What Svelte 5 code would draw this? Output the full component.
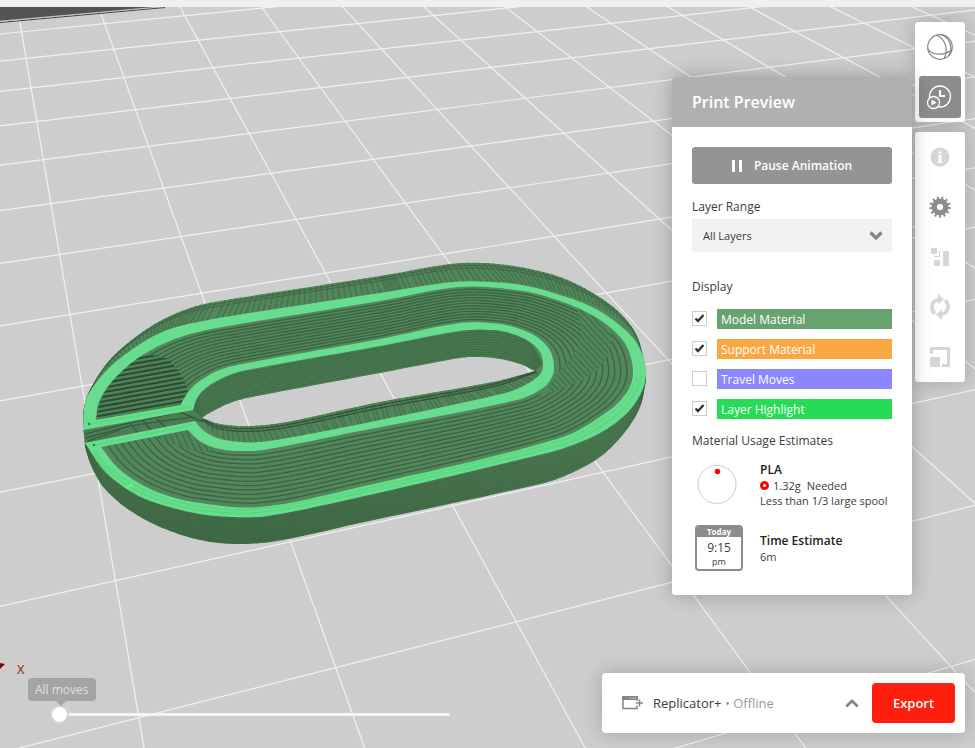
<script>
  const rows = [
    { id: 'model', label: 'Model Material', color: '#67a36e', on: true },
    { id: 'support', label: 'Support Material', color: '#faa843', on: true },
    { id: 'travel', label: 'Travel Moves', color: '#8b88ff', on: false },
    { id: 'highlight', label: 'Layer Highlight', color: '#26db55', on: true }
  ];
  let display = $state(rows);
  let move = $state(0);

  // Projective mapping of a plate rectangle (4 x 8 cells) onto the view.
  const quad = [[26, 58.3], [358, 23.5], [668.3, 360], [97, 473]];
  function makeProjection([p0, p1, p2, p3]) {
    const dx1 = p1[0] - p2[0], dx2 = p3[0] - p2[0], dx3 = p0[0] - p1[0] + p2[0] - p3[0];
    const dy1 = p1[1] - p2[1], dy2 = p3[1] - p2[1], dy3 = p0[1] - p1[1] + p2[1] - p3[1];
    const d = dx1 * dy2 - dx2 * dy1;
    const g = (dx3 * dy2 - dx2 * dy3) / d;
    const h = (dx1 * dy3 - dx3 * dy1) / d;
    return (u, v) => {
      const s = u / 4, t = (v - 2) / 8;
      const w = g * s + h * t + 1;
      return [
        ((p1[0] - p0[0] + g * p1[0]) * s + (p3[0] - p0[0] + h * p3[0]) * t + p0[0]) / w,
        ((p1[1] - p0[1] + g * p1[1]) * s + (p3[1] - p0[1] + h * p3[1]) * t + p0[1]) / w
      ];
    };
  }
  const project = makeProjection(quad);
  const seg = (a, b) => `M${a[0].toFixed(1)},${a[1].toFixed(1)}L${b[0].toFixed(1)},${b[1].toFixed(1)}`;
  const plateEdge = 0.5;
  let gridPath = seg(project(-1, plateEdge), project(16, plateEdge));
  for (let u = 0; u <= 16; u++) gridPath += seg(project(u, plateEdge), project(u, 16));
  for (let v = 1; v <= 16; v++) gridPath += seg(project(-1, v), project(16, v));

  // Smooth curve through the control points.
  function spline(p, n = 12) {
    const out = [];
    for (let i = 0; i < p.length - 1; i++) {
      const a = p[Math.max(i - 1, 0)], b = p[i], c = p[i + 1], e = p[Math.min(i + 2, p.length - 1)];
      const len = Math.hypot(c[0] - b[0], c[1] - b[1]);
      const before = Math.hypot(b[0] - a[0], b[1] - a[1]);
      const after = Math.hypot(e[0] - c[0], e[1] - c[1]);
      for (let k = 0; k < n; k++) {
        const t = k / n, t2 = t * t, t3 = t2 * t;
        out.push([0, 1].map((j) => {
          const m0 = ((c[j] - a[j]) / (len + before)) * len;
          const m1 = ((e[j] - b[j]) / (len + after)) * len;
          return (2 * t3 - 3 * t2 + 1) * b[j] + (t3 - 2 * t2 + t) * m0 + (3 * t2 - 2 * t3) * c[j] + (t3 - t2) * m1;
        }));
      }
    }
    out.push(p[p.length - 1]);
    return out;
  }
  const line = (pts) => 'M' + pts.map((q) => q[0].toFixed(1) + ',' + q[1].toFixed(1)).join('L');
  const band = (a, b) => line([...spline(a), ...spline(b).reverse()]) + 'Z';
  function loft(a, b, count, max = count) {
    const A = spline(a), B = spline(b);
    let d = '';
    for (let i = 1; i < max; i++) {
      const t = i / count;
      d += line(A.map((q, k) => [q[0] + (B[k][0] - q[0]) * t, q[1] + (B[k][1] - q[1]) * t]));
    }
    return d;
  }
  // Short diagonal strokes across a strip between two curves.
  function ribs(a, b, step, lean) {
    const A = spline(a, 30), B = spline(b, 30);
    let d = '', run = 0;
    for (let k = 1; k < A.length; k++) {
      run += Math.hypot(A[k][0] - A[k - 1][0], A[k][1] - A[k - 1][1]);
      if (run >= step) {
        run -= step;
        d += seg(A[k], [B[k][0] + lean, B[k][1]]);
      }
    }
    return d;
  }

  const infillOuter = [[96, 420], [98, 405], [106, 389], [120, 373], [138, 358], [163, 344], [187, 335], [217, 328], [380, 301], [460, 287], [523, 291], [560, 301], [590, 314], [612, 329], [627, 347], [633, 373], [627, 392], [607, 412], [560, 438], [360, 487], [260, 507], [193, 502], [160, 493], [137, 482], [117, 467], [101, 447]];
  const infillInner = [[181, 405], [182, 402], [185, 397], [190, 390], [197, 383], [206, 377], [217, 371], [237, 365], [380, 339], [460, 323], [500, 324], [523, 330], [537, 337], [547, 346], [552, 355], [554, 367], [552, 377], [543, 388], [517, 400], [360, 431], [263, 450], [237, 451], [220, 449], [207, 445], [197, 439], [188, 430]];
  const edgeOuter = [[83, 430], [85, 403], [93, 387], [110, 367], [127, 353], [150, 338], [173, 328], [203, 321], [237, 315], [380, 293], [453, 282], [493, 282], [527, 286], [560, 295], [590, 306], [613, 320], [633, 338], [643, 356], [646, 373], [642, 391], [627, 413], [600, 433], [567, 447], [547, 453], [360, 497], [267, 516], [233, 517], [200, 514], [170, 507], [143, 498], [121, 485], [103, 469], [85, 443]];
  const edgeInner = [[193, 410], [197, 398], [207, 387], [227, 376], [247, 370], [380, 346], [460, 331], [493, 330], [513, 334], [530, 342], [540, 352], [543, 363], [541, 373], [527, 384], [505, 393], [380, 420], [293, 437], [260, 442], [240, 442], [217, 438], [203, 430], [195, 421]];
  const highlight = line([...spline(edgeOuter), ...spline(edgeInner).reverse()]) + 'Z' +
    line([...spline(infillOuter), ...spline(infillInner).reverse()]) + 'Z';

  const skirtTop = [[85, 443], [92, 455], [103, 470], [121, 485], [143, 498], [170, 507], [200, 514], [233, 517], [267, 516], [360, 497], [547, 453], [567, 447], [600, 433], [627, 413], [642, 391], [646, 373]];
  const skirtBottom = [[85, 446], [90, 463], [101, 484], [113, 497], [129, 510], [160, 527], [200, 540], [237, 544], [277, 541], [360, 523], [540, 484], [567, 475], [600, 457], [625, 432], [640, 407], [646, 380]];
  const rimTop = [[83, 425], [84, 408], [90, 390], [107, 363], [129, 342], [160, 321], [193, 307], [220, 301], [380, 276], [450, 264], [483, 263], [520, 267], [560, 277], [593, 293], [620, 313], [637, 336], [645, 365]];
  const rimBottom = [[82, 422], [85, 403], [93, 387], [110, 367], [127, 353], [150, 338], [173, 328], [203, 321], [380, 293], [453, 282], [493, 282], [527, 286], [560, 295], [590, 306], [613, 320], [633, 338], [645, 365]];
  const wallTop = [[193, 410], [197, 398], [207, 387], [227, 376], [247, 370], [380, 346], [460, 331], [493, 330], [513, 334], [530, 342], [543, 363]];
  const wallBottom = [[202, 418], [206, 415], [217, 409], [230, 403], [247, 398], [380, 373], [460, 358], [480, 357], [500, 359], [520, 364], [535, 371]];
  const lipTop = [[202, 418], [220, 424], [250, 426], [287, 422], [380, 402], [493, 382], [535, 371]];
  const lipBottom = [[198, 423], [217, 438], [250, 442], [293, 437], [380, 420], [505, 393], [541, 373]];

  const silhouette = line([...spline(rimTop), ...spline(skirtBottom).reverse()]) + 'Z';
  const hole = line([...spline(wallBottom), ...spline(lipTop).reverse()]) + 'Z';

  let lobeLines = '';
  for (let i = 0; i < 17; i++) lobeLines += seg([88, 418 - i * 4.6], [200, 398 - i * 4.6]);
  let patchLines = '';
  for (let i = 0; i < 26; i++) patchLines += seg([460 + i * 6, 290], [580 + i * 6, 420]);
  let lowerRibs = '';
  for (let i = 0; i < 14; i++) lowerRibs += seg([150 + i * 6, 430], [164 + i * 6, 460]);
</script>

<main class="app">
  <svg class="scene" viewBox="0 0 975 748" preserveAspectRatio="xMinYMin slice" aria-hidden="true">
    <defs>
      <clipPath id="solid"><path d={silhouette + hole} clip-rule="evenodd" /></clipPath>
      <clipPath id="lobe"><path d="M96,420C97,392 125,362 145,355Q162,354 170,361Q184,376 188,390L181,405Z" /></clipPath>
      <clipPath id="patch"><path d="M577,308Q604,320 611,334Q614,352 597,370Q570,389 538,396Q552,386 556,374Q577,356 581,335Q581,320 577,308Z" /></clipPath>
      <clipPath id="tri"><path d="M155,437L188,430Q196,443 214,449L204,453Q178,447 155,437Z" /></clipPath>
      <linearGradient id="skirt" x1="0" y1="0" x2="0" y2="1">
        <stop offset="0" stop-color="#528358" />
        <stop offset="1" stop-color="#406946" />
      </linearGradient>
    </defs>
    <rect width="975" height="748" fill="#cdcdcd" />
    <path d={gridPath} fill="none" stroke="#f1f1f1" stroke-width="1.200" />
    <path d="M0,0H190L165,7L0,21.500Z" fill="#535353" />
    <path d="M0,22.500L165,7.500" stroke="#414141" stroke-width="1.200" />
    <path d="M0,21.200L165,6.500" stroke="#e4e4e4" stroke-width=".8" />
    <path d={silhouette + hole} fill="#53875b" fill-rule="evenodd" />
    <g clip-path="url(#solid)" fill="none">
      <path d={band(skirtTop, skirtBottom)} fill="url(#skirt)" />
      <path d={loft(skirtTop, skirtBottom, 10)} stroke="#3b6241" stroke-width=".7" opacity=".8" />
      <path d={ribs(rimTop, rimBottom, 5, 7)} stroke="#457350" stroke-width="1.500" />
      <path d={loft(rimTop, rimBottom, 7, 3)} stroke="#3d6644" stroke-width="1" />
      <path d={band(wallTop, wallBottom)} fill="#4a7a52" />
      <path d={loft(wallTop, wallBottom, 11)} stroke="#3a6241" stroke-width=".7" />
      <path d={band(lipTop, lipBottom)} fill="#52855b" />
      <path d={ribs(lipTop, lipBottom, 5, 5)} stroke="#437150" stroke-width="1.300" />
      <path d={loft(lipTop, lipBottom, 6, 3)} stroke="#315437" stroke-width="1.300" />
      <path d={loft(infillOuter, infillInner, 13)} stroke="#3a6442" stroke-width="1.400" />
      <g clip-path="url(#lobe)">
        <rect x="90" y="340" width="110" height="90" fill="#4f8158" />
        <path d={lobeLines} stroke="#2b4a31" stroke-width="2" />
      </g>
      <g clip-path="url(#patch)">
        <rect x="530" y="290" width="100" height="120" fill="#52865b" />
        <path d={patchLines} stroke="#42704b" stroke-width="1.400" />
      </g>
      <g clip-path="url(#tri)">
        <rect x="150" y="425" width="70" height="35" fill="#51845a" />
        <path d={lowerRibs} stroke="#406d48" stroke-width="1.500" />
      </g>
      <path d="M83,431L193,411L203,419L196,422L85,443Z" fill="#4b7c54" />
      <path d="M85,434L125,424L180,412L203,422M86,438L130,426L170,420L194,417M88,441L120,430M130,423l8,10M143,421l8,9M157,419l8,8" stroke="#335739" stroke-width="1.200" />
    </g>
    <path d={highlight} fill="#68dd90" fill-rule="evenodd" />
    <path d={loft(skirtTop.slice(1), [[95, 447], [107, 462], [123, 474], [141, 484], [160, 493], [180, 499], [204, 504], [233, 507], [263, 507], [360, 487], [540, 443], [560, 438], [590, 422], [618, 403], [633, 380]], 3)} fill="none" stroke="#53d773" stroke-width="1.500" opacity=".7" />
    <path d="M89,424L190,407M91,446L192,425" fill="none" stroke="#53d773" stroke-width="1.500" opacity=".7" />
    <path d="M126,488L133,484" stroke="#58f68c" stroke-width="3" />
    <circle cx="89" cy="424" r="1.200" fill="#257b3b" /><circle cx="94" cy="445" r="1.200" fill="#257b3b" />
    <path d="M0,663L5,664L0,669Z" fill="#8e0000" />
    <text x="17" y="674" class="axis">X</text>
  </svg>

  <div class="strip"></div>

  <div class="upper">
    <section class="panel">
      <h1>Print Preview</h1>
      <div class="body">
        <button class="pause">
          <svg width="10" height="12" viewBox="0 0 10 12"><path d="M0,0h3v12h-3zM7,0h3v12h-3z" fill="#fff" /></svg>
          Pause Animation
        </button>
        <label class="title range" for="layers">Layer Range</label>
        <div class="select">
          <select id="layers"><option>All Layers</option></select>
          <svg width="14" height="10" viewBox="0 0 14 10"><path d="M1.500,1.500L7,7L12.500,1.500" fill="none" stroke="#858585" stroke-width="3.200" /></svg>
        </div>
        <h2 class="title display">Display</h2>
        <div class="checks">
          {#each display as row (row.id)}
            <div class="check">
              <span class="box">
                <input type="checkbox" id={row.id} bind:checked={row.on} />
                {#if row.on}
                  <svg width="15" height="15" viewBox="0 0 15 15"><path d="M3.500,7.500L6,10L11.500,4" fill="none" stroke="#333" stroke-width="2.400" /></svg>
                {/if}
              </span>
              <label for={row.id} style="background: {row.color}">{row.label}</label>
            </div>
          {/each}
        </div>
        <h2 class="title usage">Material Usage Estimates</h2>
        <div class="estimate">
          <svg width="48" height="40" viewBox="0 0 48 40"><circle cx="22" cy="19.500" r="19" fill="#fff" stroke="#ccc" /><circle cx="22.500" cy="6.500" r="2.700" fill="#f00" /></svg>
          <div>
            <strong>PLA</strong>
            <p class="needed"><svg width="9" height="9" viewBox="0 0 9 9"><circle cx="4.500" cy="4.500" r="3" fill="#fff" stroke="#f00" stroke-width="3" /></svg>1.32g <span>Needed</span></p>
            <p>Less than 1/3 large spool</p>
          </div>
        </div>
        <div class="estimate time">
          <div class="calendar"><b>Today</b><span class="hour">9:15</span><span class="half">pm</span></div>
          <div>
            <strong>Time Estimate</strong>
            <p>6m</p>
          </div>
        </div>
      </div>
    </section>

    <nav class="tools">
      <div class="group">
        <button aria-label="Model view">
          <svg width="28" height="28" viewBox="0 0 28 28" fill="none" stroke="#858585" stroke-width="1.200"><circle cx="14" cy="14" r="12.300" /><path d="M1.800,16C6,22.500 19,23 26,16.500M16,1.800C25,6 27,16 22.500,22.500M10,2.300C19,5 23,16 18,25.500" /></svg>
        </button>
        <button class="active" aria-label="Print preview">
          <svg width="28" height="28" viewBox="0 0 28 28" fill="none" stroke="#fff" stroke-width="1.300"><circle cx="14" cy="13.500" r="10.500" /><path d="M14,7v6h5" stroke-width="2" /><circle cx="7.500" cy="19.500" r="6" fill="#8c8c8c" /><path d="M5.500,16.500l5,3l-5,3z" fill="#fff" stroke="none" /></svg>
        </button>
      </div>
      <div class="group">
        <button aria-label="Information">
          <svg width="20" height="20" viewBox="0 0 20 20"><circle cx="10" cy="10" r="9.500" fill="#d6d6d6" /><path d="M8,8h3.500v6.500h1v1.500h-5v-1.500h1.200v-5H8zM8.500,4.200h2.800v2.600H8.500z" fill="#fff" /></svg>
        </button>
        <button aria-label="Settings">
          <svg width="22" height="22" viewBox="0 0 22 22"><circle cx="11" cy="11" r="9.300" fill="none" stroke="#8c8c8c" stroke-width="2.800" stroke-dasharray="1.900 2.595" /><circle cx="11" cy="11" r="5.800" fill="none" stroke="#8c8c8c" stroke-width="5.400" /></svg>
        </button>
        <button aria-label="Arrange">
          <svg width="18" height="18" viewBox="0 0 18 18" fill="#d6d6d6"><path d="M0,0h6v6H0zM3,12h6v6H3zM12,3h6v15h-6zM3,7h1v2H3zM4,8h4V9H4zM7,3h2v6H8V4H7z" /></svg>
        </button>
        <button aria-label="Orient">
          <svg width="20" height="28" viewBox="0 0 20 28" fill="none"><path d="M5,20.500C.5,17.500 .5,8 8.500,6.800" stroke="#d6d6d6" stroke-width="3.600" /><path d="M8,1l6,5.500l-6,5z" fill="#d6d6d6" /><path d="M15,7.500C19.500,10.500 19.500,20 11.500,21.200" stroke="#d6d6d6" stroke-width="3.600" /><path d="M12,27l-6,-5.500l6,-5z" fill="#d6d6d6" /></svg>
        </button>
        <button aria-label="Scale">
          <svg width="20" height="20" viewBox="0 0 20 20" fill="#d6d6d6"><path d="M0,0h20v20h-8v-3h5V3H3v4H0zM0,10h10v10H0z" /></svg>
        </button>
      </div>
    </nav>
  </div>

  <div class="lower">
    <div class="moves">
      <label for="moves">All moves</label>
      <input id="moves" type="range" min="0" max="100" bind:value={move} />
    </div>
    <div class="printer">
      <svg width="21" height="14" viewBox="0 0 21 14"><path d="M1,1H15V5M1,1V12.500H15V9.500" fill="none" stroke="#858585" stroke-width="1.500" /><path d="M0,0h16v4H0z" fill="#858585" /><path d="M8,1.500h1v1H8zM10.500,1.500h1v1h-1zM13,1.500h1v1h-1z" fill="#fff" /><path d="M14,7h7M17.500,3.500v7" stroke="#858585" stroke-width="1.600" /></svg>
      <span class="name">Replicator+ <span class="state">• Offline</span></span>
      <button class="more" aria-label="Choose printer">
        <svg width="14" height="9" viewBox="0 0 14 9"><path d="M1.200,7.500L7,2L12.800,7.500" fill="none" stroke="#858585" stroke-width="2.800" /></svg>
      </button>
      <button class="export">Export</button>
    </div>
  </div>
</main>

<style>
  :global(body) { margin: 0; }
  .app {
    position: relative;
    box-sizing: border-box;
    min-height: 100vh;
    display: flex;
    flex-direction: column;
    overflow: hidden;
    font-family: "Open Sans", "Noto Sans", sans-serif;
    font-size: 12px;
    line-height: 16px;
    color: #3c3c3c;
    background: #cdcdcd;
  }
  .scene { position: absolute; inset: 0; width: 100%; height: 100%; }
  .axis { font-size: 13px; fill: #9a1515; }
  button, select { font: inherit; color: inherit; border: 0; padding: 0; margin: 0; background: none; }
  h1, h2, p { margin: 0; }
  .strip { position: relative; height: 7px; background: #f0f0f0; }
  .upper {
    position: relative;
    flex: 1;
    display: flex;
    justify-content: flex-end;
    align-items: flex-start;
    gap: 3px;
    padding: 15px 10px 0;
  }
  .panel {
    position: relative;
    z-index: 1;
    width: 240px;
    margin-top: 55px;
    border-radius: 3px;
    background: #fff;
    box-shadow: 0 0 20px rgba(0, 0, 0, 0.25);
  }
  h1 {
    padding: 0 20px;
    border-radius: 3px 3px 0 0;
    background: #b0b0b0;
    color: #fff;
    font-size: 16px;
    font-weight: 600;
    line-height: 50px;
  }
  .body { padding: 20px 20px 24px; display: flex; flex-direction: column; }
  .pause {
    display: flex;
    align-items: center;
    justify-content: center;
    gap: 12px;
    height: 37px;
    border-radius: 3px;
    background: #949494;
    color: #fff;
    font-weight: 600;
  }
  .title { font-size: 12px; font-weight: 500; }
  .range { margin: 15px 0 4px; }
  .select { position: relative; display: flex; }
  .select select {
    appearance: none;
    flex: 1;
    height: 33px;
    padding: 0 32px 0 11px;
    border-radius: 0;
    background: #f2f2f2;
    font-size: 11px;
  }
  .select svg { position: absolute; right: 9px; top: 12px; pointer-events: none; }
  .display { margin: 27px 0 14px; }
  .checks { display: flex; flex-direction: column; gap: 10px; }
  .check { display: flex; gap: 10px; }
  .check label { flex: 1; padding: 1px 0 0 4px; line-height: 19px; color: #fff; font-weight: 500; }
  .box { position: relative; width: 15px; height: 15px; margin-top: 2px; }
  .box input { appearance: none; display: block; box-sizing: border-box; width: 15px; height: 15px; margin: 0; border: 1px solid #ccc; background: #fff; }
  .box svg { position: absolute; inset: 0; pointer-events: none; }
  .usage { margin: 14px 0 13px; }
  .estimate { display: flex; align-items: center; gap: 17px; min-height: 46px; padding-left: 3px; }
  .estimate p { font-size: 11px; line-height: 15px; white-space: nowrap; }
  .estimate strong { display: block; font-weight: 600; color: #222; }
  .needed { display: flex; align-items: center; gap: 4px; }
  .needed span { padding-left: 2px; }
  .time { margin-top: 17px; }
  .calendar {
    box-sizing: border-box;
    width: 48px;
    height: 46px;
    display: flex;
    flex-direction: column;
    align-items: center;
    border: 2px solid #8c8c8c;
    border-radius: 4px;
    overflow: hidden;
  }
  .calendar b { align-self: stretch; background: #8c8c8c; color: #fff; font-size: 8px; line-height: 10px; text-align: center; }
  .hour { padding-top: 2px; font-size: 12px; line-height: 17px; }
  .half { font-size: 9px; line-height: 12px; }
  .tools { display: flex; flex-direction: column; gap: 10px; }
  .group {
    width: 50px;
    display: flex;
    flex-direction: column;
    border-radius: 3px;
    background: #fff;
    box-shadow: 0 0 20px rgba(0, 0, 0, 0.2);
  }
  .group button { height: 50px; display: flex; align-items: center; justify-content: center; }
  .group .active { height: 42px; margin: 4px; border-radius: 3px; background: #8c8c8c; }
  .lower {
    position: relative;
    display: flex;
    justify-content: space-between;
    align-items: flex-end;
    padding: 0 10px 15px 28px;
  }
  .moves { display: flex; flex-direction: column; align-items: flex-start; gap: 6px; padding-bottom: 11px; }
  .moves label {
    position: relative;
    padding: 0 7px;
    border-radius: 4px;
    background: #a4a4a4;
    color: #e0e0e0;
    font-weight: 500;
    line-height: 23px;
  }
  .moves label::after {
    content: "";
    position: absolute;
    left: 28px;
    top: 100%;
    border: 5px solid transparent;
    border-top-color: #a4a4a4;
    border-bottom: 0;
  }
  .moves input { appearance: none; width: 398px; height: 15px; margin: 0 0 0 24px; background: none; }
  .moves input::-webkit-slider-runnable-track { height: 3px; border-radius: 2px; background: #f4f4f4; }
  .moves input::-webkit-slider-thumb {
    appearance: none;
    width: 15px;
    height: 15px;
    margin-top: -6px;
    border-radius: 50%;
    background: #fff;
    box-shadow: 0 0 0 2px #d2d2d2;
  }
  .printer {
    box-sizing: border-box;
    width: 363px;
    display: flex;
    align-items: center;
    padding: 10px 10px 10px 20px;
    border-radius: 4px;
    background: #fff;
    box-shadow: 0 0 20px rgba(0, 0, 0, 0.2);
  }
  .name { flex: 1; padding-left: 10px; font-size: 13px; }
  .state { color: #999; }
  .more { display: flex; padding: 12px 13px; }
  .export { width: 83px; height: 40px; border-radius: 4px; background: #ff1f0f; color: #fff; font-size: 13px; font-weight: 600; }
</style>
